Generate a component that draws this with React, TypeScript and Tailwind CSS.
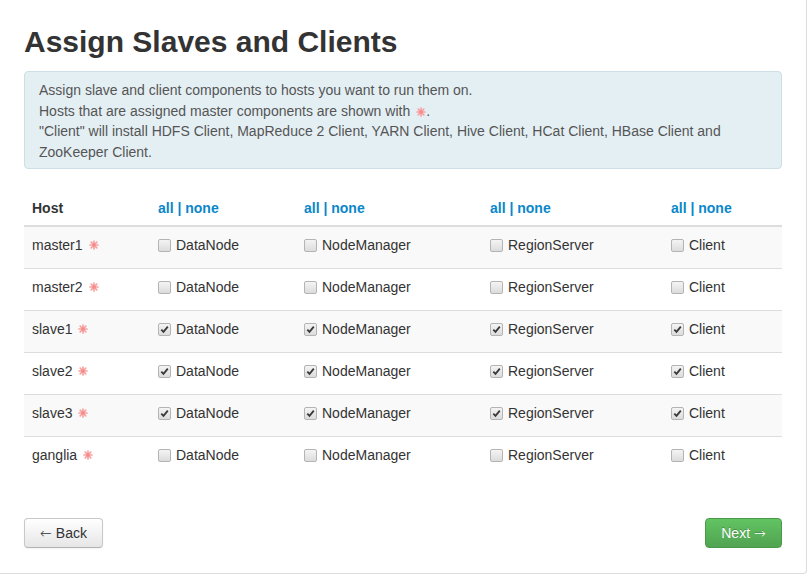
import React from "react";

const Star = () => (
  <svg width="10" height="10" viewBox="0 0 10 10" className="inline-block ml-[6px] align-[-1px]">
    <g stroke="#f7a3a3" strokeWidth="1.7" strokeLinecap="round">
      <line x1="5" y1="1" x2="5" y2="9" />
      <line x1="1" y1="5" x2="9" y2="5" />
      <line x1="2.2" y1="2.2" x2="7.8" y2="7.8" />
      <line x1="7.8" y1="2.2" x2="2.2" y2="7.8" />
    </g>
    <circle cx="5" cy="5" r="1.8" fill="#f58a8a" />
  </svg>
);

const Box = ({ checked }: { checked: boolean }) => (
  <span className="inline-flex w-[13px] h-[13px] mr-[5px] rounded-[2px] border border-[#b4b4b4] bg-gradient-to-b from-[#f4f4f4] to-[#dcdcdc] items-center justify-center shrink-0">
    {checked && (
      <svg width="9" height="9" viewBox="0 0 9 9">
        <path d="M1.3 4.6 L3.5 6.9 L7.8 1.6" stroke="#3a3a3a" strokeWidth="1.8" fill="none" />
      </svg>
    )}
  </span>
);

const hosts = [
  { name: "master1", on: false },
  { name: "master2", on: false },
  { name: "slave1", on: true },
  { name: "slave2", on: true },
  { name: "slave3", on: true },
  { name: "ganglia", on: false },
];

const comps = ["DataNode", "NodeManager", "RegionServer", "Client"];

const grid = "grid grid-cols-[126px_146px_186px_181px_1fr]";

export default function App() {
  return (
    <div className="w-[812px] h-[576px] bg-white font-['Liberation_Sans',Arial,sans-serif] text-[14px] text-[#333]">
      <div className="w-[807px] h-[574px] border-r border-b border-[#dddddd] rounded-br-[4px] pl-6 pr-[24px] pt-[25px]">
        <h2 className="text-[30px] leading-[33px] font-bold text-[#333]">Assign Slaves and Clients</h2>
        <div className="mt-[13px] h-[98px] bg-[#e4eff4] border border-[#cfdee5] rounded-[4px] px-[14px] py-[8px] leading-[20.5px] text-[#555]">
          <div>Assign slave and client components to hosts you want to run them on.</div>
          <div>
            Hosts that are assigned master components are shown with
            <Star />.
          </div>
          <div>
            "Client" will install HDFS Client, MapReduce 2 Client, YARN Client, Hive Client, HCat Client, HBase Client and
            ZooKeeper Client.
          </div>
        </div>
        <div className="mt-[20px]">
          <div className={`${grid} h-[38px] border-b-2 border-[#dddddd] items-end pb-[7px] leading-[20px]`}>
            <div className="pl-2 font-bold">Host</div>
            {comps.map((c) => (
              <div key={c} className="pl-2 font-bold text-[#0a87c9]">
                all | none
              </div>
            ))}
          </div>
          {hosts.map((h, i) => (
            <div
              key={h.name}
              className={`${grid} ${i > 0 ? "h-[42px] border-t border-[#dddddd]" : "h-[41px]"} ${i % 2 === 0 ? "bg-[#f9f9f9]" : "bg-white"} leading-[20px] items-start pt-[8px]`}
            >
              <div className="pl-2 flex items-center">
                {h.name}
                <Star />
              </div>
              {comps.map((c) => (
                <div key={c} className="pl-2 flex items-center">
                  <Box checked={h.on} />
                  {c}
                </div>
              ))}
            </div>
          ))}
        </div>
        <div className="mt-[40px] flex justify-between">
          <button className="h-[30px] w-[79px] flex items-center justify-center gap-[4px] rounded-[4px] border border-[#c8c8c8] border-b-[#b3b3b3] bg-gradient-to-b from-white to-[#e6e6e6] text-[#333] leading-[20px] shadow-[0_1px_2px_rgba(0,0,0,0.05)]">
            <span className="font-['DejaVu_Sans'] text-[14px] font-light">←</span>
            <span>Back</span>
          </button>
          <button className="h-[30px] w-[77px] flex items-center justify-center gap-[4px] rounded-[4px] border border-[#4a9a4a] bg-gradient-to-b from-[#62c462] to-[#51a351] text-white leading-[20px] [text-shadow:0_-1px_0_rgba(0,0,0,0.25)]">
            <span>Next</span>
            <span className="font-['DejaVu_Sans'] text-[14px] font-light">→</span>
          </button>
        </div>
      </div>
    </div>
  );
}
